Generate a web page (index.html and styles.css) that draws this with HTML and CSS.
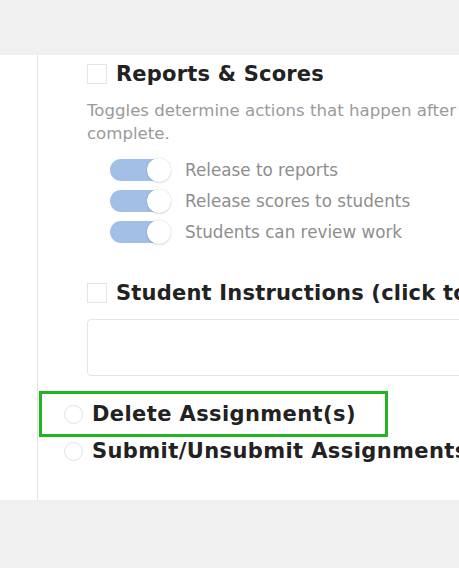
FILE: index.html
```html
<!DOCTYPE html>
<html>
<head>
<meta charset="utf-8">
<link rel="stylesheet" href="styles.css">
</head>
<body>
<div class="top-band"></div>
<div class="panel">
  <div class="rail">
    <div class="section">
      <div class="heading-row">
        <span class="checkbox"></span>
        <span class="heading">Reports &amp; Scores</span>
      </div>
      <p class="desc">Toggles determine actions that happen after complete.</p>
      <ul class="toggles">
        <li class="toggle-row"><span class="toggle"><span class="knob"></span></span><span class="toggle-label">Release to reports</span></li>
        <li class="toggle-row"><span class="toggle"><span class="knob"></span></span><span class="toggle-label">Release scores to students</span></li>
        <li class="toggle-row"><span class="toggle"><span class="knob"></span></span><span class="toggle-label">Students can review work</span></li>
      </ul>
    </div>
    <div class="section section-2">
      <div class="heading-row">
        <span class="checkbox"></span>
        <span class="heading">Student Instructions (click to edit)</span>
      </div>
      <div class="textbox"></div>
    </div>
    <div class="actions">
      <div class="action highlighted"><span class="radio"></span><span class="action-label">Delete Assignment(s)</span></div>
      <div class="action second"><span class="radio"></span><span class="action-label">Submit/Unsubmit Assignments</span></div>
    </div>
  </div>
</div>
</body>
</html>
```
FILE: styles.css
```css
html, body {
  margin: 0;
  padding: 0;
}
body {
  width: 459px;
  height: 568px;
  overflow: hidden;
  background: #f0f0f0;
  font-family: "DejaVu Sans", Verdana, sans-serif;
  color: #222;
}
.top-band {
  height: 55px;
}
.panel {
  background: #fff;
  height: 445px;
  display: flex;
}
.rail {
  margin-left: 37px;
  border-left: 1px solid #e4e4da;
  width: 900px;
  flex: none;
}
.section {
  margin-left: 49px;
  padding-top: 7px;
}
.heading-row {
  display: flex;
  align-items: center;
  gap: 9px;
  white-space: nowrap;
}
.checkbox {
  width: 18px;
  height: 18px;
  border: 1px solid #e6e6dc;
  flex: none;
}
.heading {
  font-weight: bold;
  font-size: 21px;
  letter-spacing: 0.2px;
}
.desc {
  margin: 13px 0 0;
  width: 385px;
  font-size: 16.6px;
  line-height: 23px;
  color: #9a9a9a;
}
.toggles {
  list-style: none;
  margin: 14px 0 0 23px;
  padding: 0;
  display: flex;
  flex-direction: column;
  gap: 9px;
}
.toggle-row {
  display: flex;
  align-items: center;
  gap: 15px;
  height: 22px;
}
.toggle {
  position: relative;
  width: 60px;
  height: 22px;
  border-radius: 11px;
  background: #a2c0e6;
  flex: none;
}
.knob {
  position: absolute;
  right: -1px;
  top: -1px;
  width: 24px;
  height: 24px;
  border-radius: 50%;
  background: #fff;
  box-shadow: 0 0 1px rgba(0,0,0,0.25), 0 1px 2px rgba(0,0,0,0.12);
}
.toggle-label {
  font-size: 16.8px;
  color: #8e8e8e;
  white-space: nowrap;
}
.section-2 {
  padding-top: 38px;
}
.textbox {
  margin-top: 14px;
  height: 55px;
  border: 1px solid #e6e6dc;
  border-radius: 4px;
}
.actions {
  margin-top: 15px;
  margin-left: 1px;
}
.action {
  display: flex;
  align-items: center;
  gap: 9px;
  padding-left: 24px;
  white-space: nowrap;
}
.highlighted {
  width: 321px;
  height: 40px;
  border: 3px solid #22b422;
  padding-left: 22px;
}
.second {
  height: 28px;
  padding-left: 25px;
}
.radio {
  width: 17px;
  height: 17px;
  border: 1px solid #e2e2e2;
  border-radius: 50%;
  flex: none;
}
.action-label {
  font-weight: bold;
  font-size: 21px;
  letter-spacing: 0.4px;
}
```
